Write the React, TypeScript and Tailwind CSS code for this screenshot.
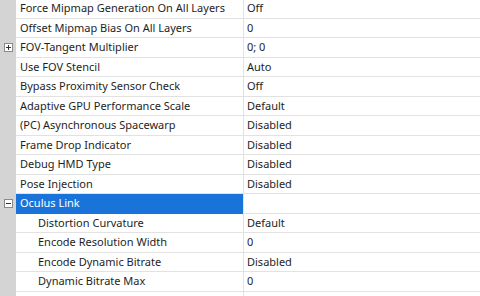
import React from "react";

type Row = {
  name: string;
  value?: string;
  level?: number;
  expander?: "plus" | "minus";
  category?: boolean;
};

const rows: Row[] = [
  { name: "Force Mipmap Generation On All Layers", value: "Off" },
  { name: "Offset Mipmap Bias On All Layers", value: "0" },
  { name: "FOV-Tangent Multiplier", value: "0; 0", expander: "plus" },
  { name: "Use FOV Stencil", value: "Auto" },
  { name: "Bypass Proximity Sensor Check", value: "Off" },
  { name: "Adaptive GPU Performance Scale", value: "Default" },
  { name: "(PC) Asynchronous Spacewarp", value: "Disabled" },
  { name: "Frame Drop Indicator", value: "Disabled" },
  { name: "Debug HMD Type", value: "Disabled" },
  { name: "Pose Injection", value: "Disabled" },
  { name: "Oculus Link", category: true, expander: "minus" },
  { name: "Distortion Curvature", value: "Default", level: 1 },
  { name: "Encode Resolution Width", value: "0", level: 1 },
  { name: "Encode Dynamic Bitrate", value: "Disabled", level: 1 },
  { name: "Dynamic Bitrate Max", value: "0", level: 1 },
  { name: "", value: "", level: 1 },
];

const Expander = ({ kind }: { kind: "plus" | "minus" }) => (
  <span className="relative block w-[9px] h-[9px] border border-[#8a8a8a] bg-white">
    <span className="absolute left-[1px] right-[1px] top-[3px] h-[1px] bg-[#333]" />
    {kind === "plus" && (
      <span className="absolute top-[1px] bottom-[1px] left-[3px] w-[1px] bg-[#333]" />
    )}
  </span>
);

export default function App() {
  return (
    <div
      className="w-[480px] h-[296px] overflow-hidden bg-white text-[11px] text-[#1e1e1e]"
      style={{ fontFamily: '"Noto Sans", "Open Sans", sans-serif' }}
    >
      <div className="-mt-[1px]">
        {rows.map((row, i) => (
          <div key={i} className="flex h-[19.5px]">
            <div className="w-[16px] shrink-0 bg-[#d4d4d4] flex items-center justify-center">
              {row.expander && <Expander kind={row.expander} />}
            </div>
            <div
              className={`w-[227px] shrink-0 flex items-center border-b whitespace-nowrap overflow-hidden ${
                row.category
                  ? "bg-[#1a73d9] text-white border-[#1a73d9] pl-[4px]"
                  : "border-[#e2e2e2]"
              } ${row.level ? "pl-[22px]" : row.category ? "" : "pl-[4px]"}`}
            >
              {row.name}
            </div>
            <div className="flex-1 flex items-center pl-[3px] border-l border-b border-[#e2e2e2] whitespace-nowrap">
              {row.value}
            </div>
          </div>
        ))}
      </div>
    </div>
  );
}
